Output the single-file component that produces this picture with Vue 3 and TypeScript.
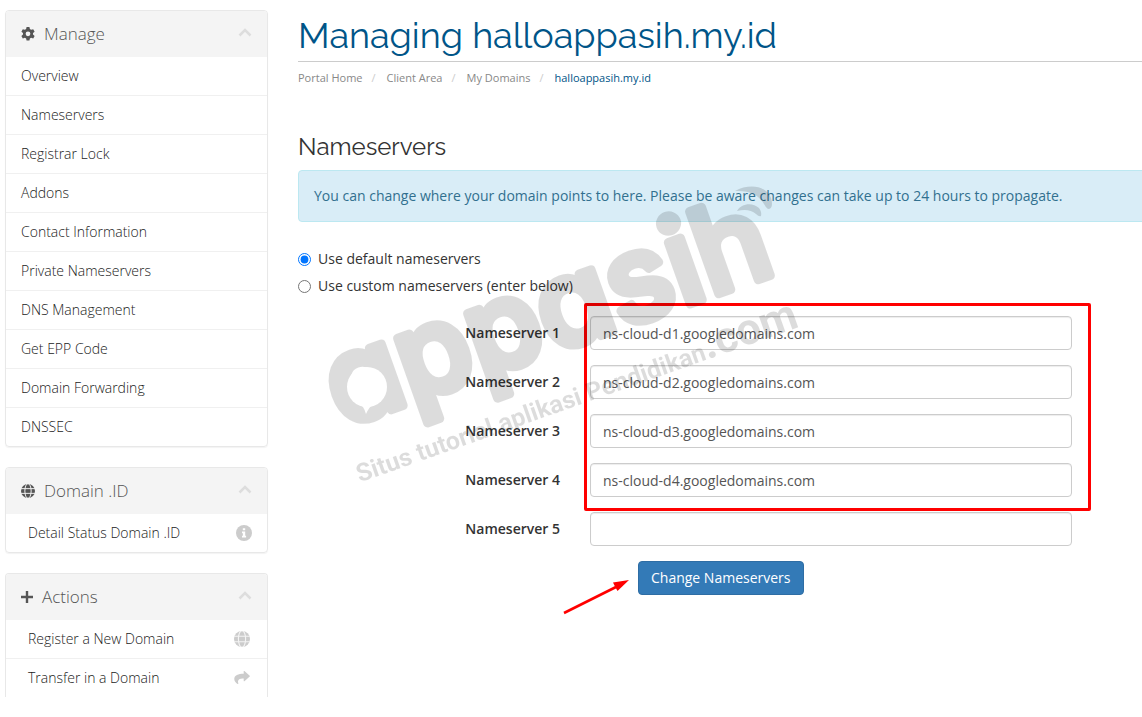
<script setup lang="ts">
import { ref } from 'vue'

interface ActionItem {
  label: string
  icon: 'info' | 'globe' | 'share'
}

const manageItems: string[] = [
  'Overview',
  'Nameservers',
  'Registrar Lock',
  'Addons',
  'Contact Information',
  'Private Nameservers',
  'DNS Management',
  'Get EPP Code',
  'Domain Forwarding',
  'DNSSEC',
]
const domainItems: ActionItem[] = [{ label: 'Detail Status Domain .ID', icon: 'info' }]
const actionItems: ActionItem[] = [
  { label: 'Register a New Domain', icon: 'globe' },
  { label: 'Transfer in a Domain', icon: 'share' },
]
const crumbs: string[] = ['Portal Home', 'Client Area', 'My Domains']

const mode = ref<'default' | 'custom'>('default')
const servers = ref<string[]>([
  'ns-cloud-d1.googledomains.com',
  'ns-cloud-d2.googledomains.com',
  'ns-cloud-d3.googledomains.com',
  'ns-cloud-d4.googledomains.com',
])
const lastServer = ref('')
</script>

<template>
  <div class="page">
    <svg class="defs" aria-hidden="true">
      <symbol id="i-globe" viewBox="0 0 16 16">
        <circle cx="8" cy="8" r="8" fill="currentColor" />
        <g fill="none" class="cut" stroke-width="1.1">
          <ellipse cx="8" cy="8" rx="3.6" ry="8.4" />
          <path d="M0 5.3h16M0 10.7h16" />
        </g>
      </symbol>
      <symbol id="i-chevron" viewBox="0 0 14 9">
        <path d="M1.5 7.5 7 2l5.500 5.500" fill="none" stroke="currentColor" stroke-width="2.500" />
      </symbol>
      <symbol id="i-gear" viewBox="1 0.3 14 14.8">
        <path
          fill="currentColor"
          fill-rule="evenodd"
          d="M6.500.3h3l.5 2.200 1.300.8 2.200-.7 1.500 2.600-1.700 1.500v1.600l1.700 1.500-1.500 2.600-2.200-.7-1.300.8-.5 2.200h-3L6 12.500l-1.300-.8-2.200.7L1 9.800l1.700-1.500V6.700L1 5.200l1.500-2.600 2.200.7L6 2.500zM8 5a2.500 2.500 0 1 0 0 5 2.500 2.500 0 0 0 0-5z"
        />
      </symbol>
      <symbol id="i-info" viewBox="0 0 16 16">
        <circle cx="8" cy="8" r="8" fill="currentColor" />
        <path fill="#fff" d="M6.800 3.200h2.400v2.100H6.800zM6 6.500h3.200v4.300h.9v1.700H6v-1.700h.9V8.200H6z" />
      </symbol>
      <symbol id="i-share" viewBox="0 0 17 15">
        <path
          fill="currentColor"
          d="M10.300.4c0-.4.5-.6.8-.3l5.600 4.900c.3.300.3.700 0 1L11.100 10.900c-.3.300-.8.100-.8-.3V8C5.800 8 3.400 9 4.600 13.300c.1.500-.4.8-.8.500C1.800 12.600.3 10.800.3 8.600c0-4.300 4.200-5.600 10-5.700z"
        />
      </symbol>
    </svg>

    <aside class="sidebar">
      <nav class="panel" aria-label="Manage">
        <h3 class="panel-head">
          <svg class="head-icon"><use href="#i-gear" /></svg>
          <span>Manage</span>
          <svg class="chevron"><use href="#i-chevron" /></svg>
        </h3>
        <ul>
          <li v-for="item in manageItems" :key="item">
            <a href="#">{{ item }}</a>
          </li>
        </ul>
      </nav>

      <nav class="panel" aria-label="Domain .ID">
        <h3 class="panel-head">
          <svg class="head-icon"><use href="#i-globe" /></svg>
          <span>Domain .ID</span>
          <svg class="chevron"><use href="#i-chevron" /></svg>
        </h3>
        <ul>
          <li v-for="item in domainItems" :key="item.label">
            <a href="#" class="action">
              {{ item.label }}
              <svg class="row-icon"><use :href="'#i-' + item.icon" /></svg>
            </a>
          </li>
        </ul>
      </nav>

      <nav class="panel open-ended" aria-label="Actions">
        <h3 class="panel-head">
          <svg class="head-icon plus" viewBox="0 0 12 12">
            <path d="M6 0v12M0 6h12" stroke="currentColor" stroke-width="2.400" />
          </svg>
          <span>Actions</span>
          <svg class="chevron"><use href="#i-chevron" /></svg>
        </h3>
        <ul>
          <li v-for="item in actionItems" :key="item.label">
            <a href="#" class="action shifted">
              {{ item.label }}
              <svg class="row-icon"><use :href="'#i-' + item.icon" /></svg>
            </a>
          </li>
        </ul>
      </nav>
    </aside>

    <main class="main">
      <h1>Managing halloappasih.my.id</h1>
      <ol class="crumbs">
        <li v-for="crumb in crumbs" :key="crumb">
          <a href="#">{{ crumb }}</a>
        </li>
        <li class="current">halloappasih.my.id</li>
      </ol>

      <h2>Nameservers</h2>
      <div class="alert">
        You can change where your domain points to here. Please be aware changes can take up to 24
        hours to propagate.
      </div>

      <form @submit.prevent>
        <div class="choices">
          <label><input v-model="mode" type="radio" name="mode" value="default" />Use default nameservers</label>
          <label><input v-model="mode" type="radio" name="mode" value="custom" />Use custom nameservers (enter below)</label>
        </div>

        <div class="fields marked">
          <div v-for="(_, i) in servers" :key="i" class="field">
            <label :for="'ns' + (i + 1)">Nameserver {{ i + 1 }}</label>
            <input :id="'ns' + (i + 1)" v-model="servers[i]" type="text" />
          </div>
        </div>
        <div class="fields">
          <div class="field">
            <label for="ns5">Nameserver 5</label>
            <input id="ns5" v-model="lastServer" type="text" />
          </div>
        </div>

        <div class="submit">
          <button type="submit">Change Nameservers</button>
          <svg class="arrow" viewBox="0 0 70 40" aria-hidden="true">
            <path d="M2 38 54 12" stroke="#f00" stroke-width="2.600" />
            <path d="M67 5 51 7.500 53 11.500 55.500 16z" fill="#f00" />
          </svg>
        </div>
      </form>

      <svg class="watermark" viewBox="0 -100 560 480" aria-hidden="true">
        <mask id="bubble" maskUnits="userSpaceOnUse" x="0" y="-100" width="560" height="480">
          <rect x="0" y="-100" width="560" height="480" fill="#fff" />
          <circle cx="59" cy="212" r="20" />
          <path d="M50 227q6 4 8 12q3-7 9-12z" />
        </mask>
        <g mask="url(#bubble)">
          <g transform="translate(47 252) rotate(-19.500)">
            <text class="brand" x="-13" y="-4">appasih</text>
          </g>
        </g>
        <g transform="translate(47 252) rotate(-19.500)">
          <text class="tagline" x="-14" y="54">Situs tutorial aplikasi Pendidikan<tspan class="tld">.com</tspan></text>
        </g>
        <path d="M427 16C438 10 452 10 459 17Q464 22 464 29Q464 34 460 34Q458 33 456 29Q448 15 427 16z" />
        <path d="M429 36C433 28 445 27 451 33Q454 37 453 41Q451 42 448 39Q441 33 429 36z" />
      </svg>
    </main>
  </div>
</template>

<style>
body {
  margin: 0;
  background: #fff;
}
</style>

<style scoped>
.page {
  display: flex;
  align-items: flex-start;
  gap: 30px;
  padding: 10px 0 20px 5px;
  overflow: hidden;
  font-family: 'Open Sans', 'Noto Sans', sans-serif;
  font-size: 14px;
  line-height: 20px;
  color: #333;
}
.defs {
  position: absolute;
  width: 0;
  height: 0;
}
h1,
h2,
h3,
ul,
ol {
  margin: 0;
  padding: 0;
  list-style: none;
}
a {
  color: inherit;
  text-decoration: none;
}
.sidebar {
  display: flex;
  flex: none;
  flex-direction: column;
  gap: 20px;
  width: 263px;
}
.panel {
  box-sizing: border-box;
  border: 1px solid #e8e8e8;
  border-radius: 4px;
  box-shadow: 0 1px 1px rgba(0, 0, 0, 0.05);
  color: #555;
}
.open-ended {
  border-bottom: 0;
  border-radius: 4px 4px 0 0;
  box-shadow: none;
}
.panel-head {
  display: flex;
  align-items: center;
  height: 46px;
  padding: 0 15px;
  background: #f4f4f4;
  border-radius: 3px 3px 0 0;
  font-size: 17px;
  font-weight: 300;
}
.head-icon {
  width: 14px;
  height: 14px;
  margin-right: 9px;
}
.head-icon.plus {
  width: 12px;
  height: 12px;
}
.cut {
  stroke: #f4f4f4;
}
.chevron {
  width: 14px;
  height: 9px;
  margin: 0 0 4px auto;
  color: #ddd;
}
.panel ul {
  color: #222;
  font-weight: 320;
}
.panel li + li {
  border-top: 1px solid #f0f0f0;
}
.panel li a {
  display: flex;
  align-items: center;
  justify-content: space-between;
  height: 38px;
  padding: 0 15px;
}
.panel li a.action {
  padding-left: 22px;
}
.panel li a.shifted {
  padding-right: 17px;
}
.row-icon {
  width: 16px;
  height: 16px;
  color: #ccc;
}
.main {
  position: relative;
  flex: 1;
  min-width: 0;
}
h1 {
  height: 51px;
  border-bottom: 1px solid #ccc;
  color: #058;
  font-family: Raleway, Lato, sans-serif;
  font-size: 36px;
  font-weight: 400;
  line-height: 51px;
}
.crumbs {
  display: flex;
  padding-top: 6px;
  color: #888;
  font-size: 11px;
}
.crumbs li + li::before {
  padding: 0 11px 0 9px;
  color: #ccc;
  content: '/';
}
.crumbs .current {
  color: #058;
}
h2 {
  margin-top: 43px;
  padding-bottom: 7px;
  font-family: Raleway, Lato, sans-serif;
  font-size: 24px;
  font-weight: 400;
  line-height: 32px;
}
.alert {
  padding: 15px;
  margin-right: -15px;
  border: 1px solid #bce8f1;
  border-radius: 4px;
  background: #d9edf7;
  color: #31708f;
}
.choices {
  display: flex;
  flex-direction: column;
  align-items: flex-start;
  gap: 7px;
  padding: 27px 0 20px;
}
.choices label {
  display: flex;
  align-items: center;
}
.choices input {
  width: 13px;
  height: 13px;
  margin: 0 7px 0 0;
}
.fields {
  position: relative;
}
.marked::after {
  position: absolute;
  inset: -13px 51px -14px 286px;
  border: 3px solid #f00;
  border-radius: 2px;
  content: '';
  pointer-events: none;
}
.field {
  display: grid;
  grid-template-columns: 262px 1fr;
  gap: 30px;
  margin: 0 70px 15px 0;
}
.field label {
  padding-top: 7px;
  font-weight: 600;
  text-align: right;
}
.field input {
  box-sizing: border-box;
  width: 100%;
  height: 34px;
  padding: 6px 12px;
  border: 1px solid #ccc;
  border-radius: 4px;
  background: #fff;
  box-shadow: inset 0 1px 1px rgba(0, 0, 0, 0.075);
  color: #555;
  font: inherit;
}
.submit {
  position: relative;
  padding-left: 340px;
}
.submit button {
  height: 34px;
  padding: 0 12px;
  border: 1px solid #2e6da4;
  border-radius: 4px;
  background: #337ab7;
  color: #fff;
  font: inherit;
}
.arrow {
  position: absolute;
  top: 14px;
  left: 264px;
  width: 70px;
  height: 40px;
}
.watermark {
  position: absolute;
  top: 65px;
  left: 10px;
  width: 560px;
  height: 480px;
  overflow: visible;
  opacity: 0.135;
  pointer-events: none;
}
.brand {
  font-family: Inter, sans-serif;
  font-feature-settings: 'cv11';
  font-size: 120px;
  font-weight: 500;
  stroke: #000;
  stroke-linejoin: round;
  stroke-width: 9px;
}
.tagline {
  font-family: 'Liberation Sans Narrow', Roboto, sans-serif;
  font-size: 25px;
  font-weight: 700;
}
.tld {
  font-size: 44px;
}
</style>
